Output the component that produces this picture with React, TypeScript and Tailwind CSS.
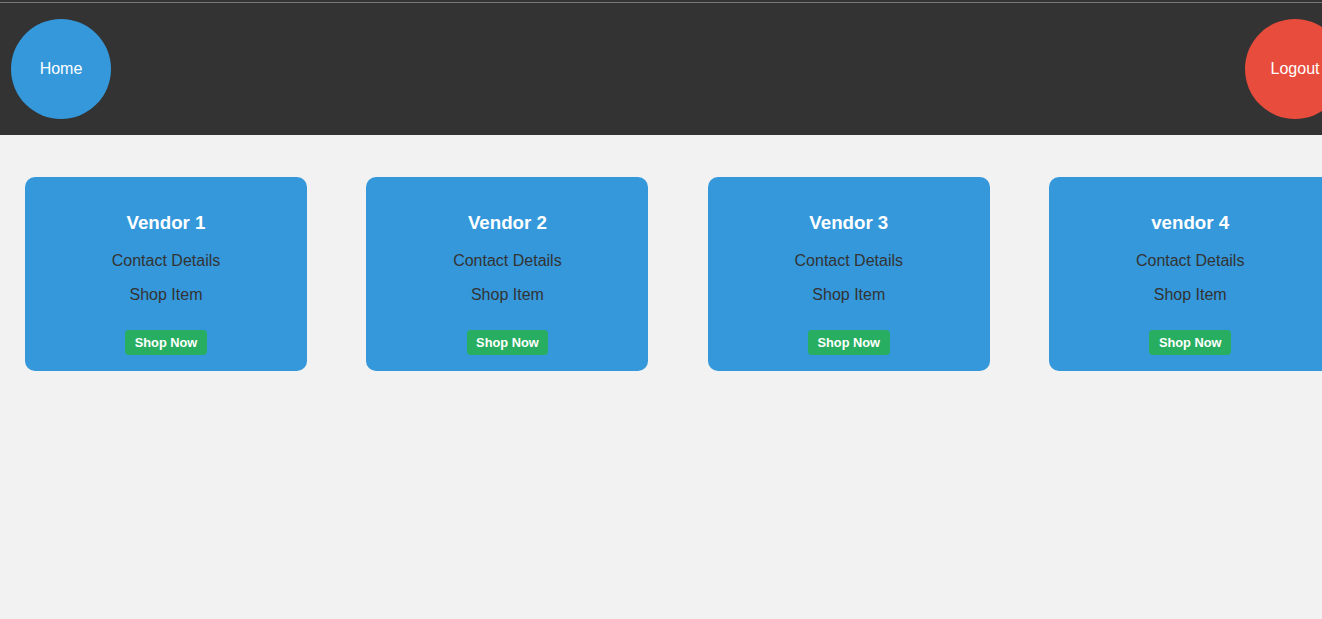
import React from 'react';

const vendors = ['Vendor 1', 'Vendor 2', 'Vendor 3', 'vendor 4'];

const VendorCard = ({ name }: { name: string }) => {
  return (
    <div className="w-[282px] shrink-0 rounded-[10px] bg-[#3498db] pt-[35px] pb-[16px] flex flex-col items-center text-center">
      <h3 className="text-[18.72px] leading-[21px] font-bold text-white">{name}</h3>
      <p className="mt-[19px] text-[16px] leading-[18px] text-[#333]">Contact Details</p>
      <p className="mt-[16px] text-[16px] leading-[18px] text-[#333]">Shop Item</p>
      <button className="mt-[26px] h-[25px] px-[9.5px] rounded-[4px] bg-[#27ae60] text-white text-[12.8px] font-bold">
        Shop Now
      </button>
    </div>
  );
};

const App = () => {
  return (
    <div className="min-h-[619px] bg-[#f2f2f2] overflow-hidden" style={{ fontFamily: '"Liberation Sans", Arial, sans-serif' }}>
      {/* Header */}
      <header className="bg-[#333333] h-[135px] flex flex-col">
        <div className="h-[2px]" />
        <div className="h-px bg-[#777]" />
        <div className="flex-1 flex items-center overflow-hidden">
          <button className="ml-[11px] w-[100px] h-[100px] shrink-0 rounded-full bg-[#3498db] text-white text-[16px]">
            Home
          </button>
          <button className="ml-auto mr-[-23px] w-[100px] h-[100px] shrink-0 rounded-full bg-[#e74c3c] text-white text-[16px]">
            Logout
          </button>
        </div>
      </header>

      {/* Vendors */}
      <div className="flex gap-[59.4px] pl-[25px] pt-[42px] overflow-hidden">
        {vendors.map((v) => (
          <VendorCard key={v} name={v} />
        ))}
      </div>
    </div>
  );
};

export default App;
